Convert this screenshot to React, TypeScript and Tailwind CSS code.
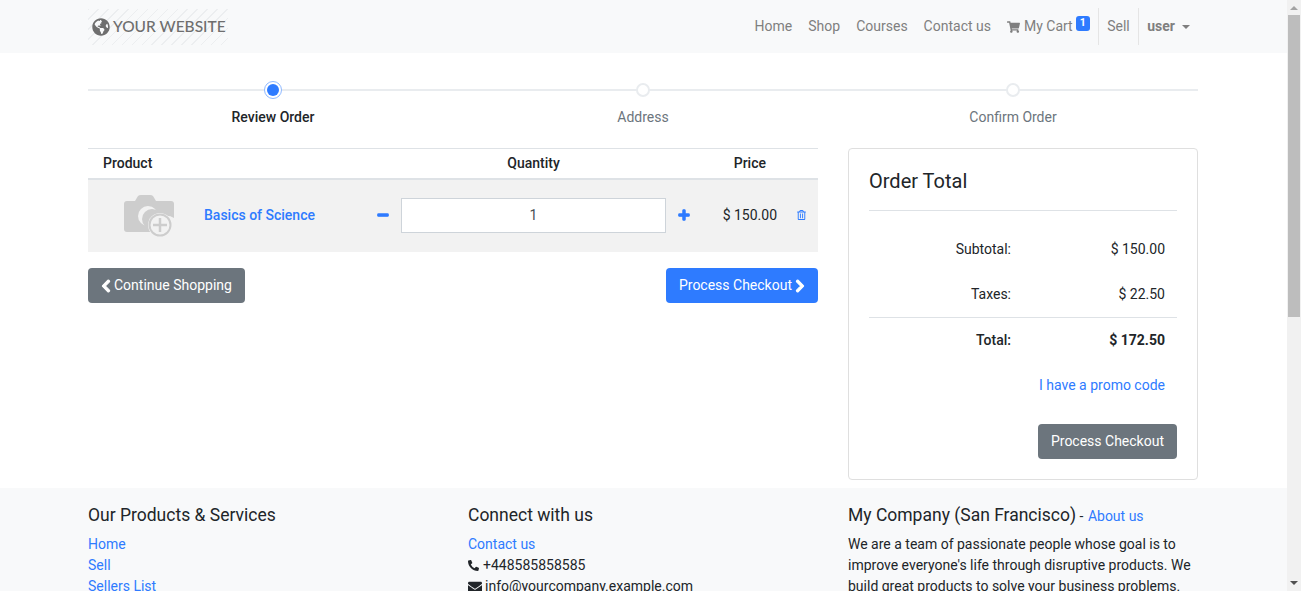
import { FaChevronLeft, FaChevronRight, FaEnvelope, FaGlobeAmericas, FaMinus, FaPhoneAlt, FaPlus, FaRegTrashAlt, FaShoppingCart } from "react-icons/fa";

function Step({ label, active }: { label: string; active?: boolean }) {
    return (
        <div className="flex flex-col items-center w-[370px]">
            <div className="h-[18px] flex items-center">
                {active ? (
                    <div className="relative z-10 w-[18px] h-[18px] rounded-full bg-white border border-[#8fb9ff] flex items-center justify-center">
                        <div className="w-[12px] h-[12px] rounded-full bg-[#2e7bff]" />
                    </div>
                ) : (
                    <div className="relative z-10 w-[14px] h-[14px] rounded-full bg-white border-2 border-[#e9ecef]" />
                )}
            </div>
            <div className={`mt-[8px] text-[14px] leading-[21px] ${active ? "font-medium text-[#212529]" : "text-[#6c757d]"}`}>{label}</div>
        </div>
    );
}

export default function App() {
    return (
        <div className="h-[591px] overflow-hidden flex font-['Roboto',sans-serif] text-[14px] text-[#212529]">
            <div className="w-[1287px] shrink-0">
                <nav className="h-[53px] bg-[#f8f9fa] pl-[88px] pr-[97px] flex items-center justify-between">
                    <div className="h-[36px] w-[140px] flex items-center text-[#6e6e6e] font-['Lato',sans-serif] text-[15.5px] font-medium bg-[repeating-linear-gradient(135deg,#eceef0_0px,#eceef0_1px,transparent_1px,transparent_7px)]">
                        <FaGlobeAmericas className="w-[18px] h-[18px] ml-[4px] mr-[3px]" />
                        YOUR WEBSITE
                    </div>
                    <div className="flex items-center text-[#7f7f7f]">
                        <span className="mr-4">Home</span>
                        <span className="mr-4">Shop</span>
                        <span className="mr-4">Courses</span>
                        <span className="mr-4">Contact us</span>
                        <FaShoppingCart className="w-[13px] h-[12px] mr-[4px]" />
                        <span>My Cart</span>
                        <span className="ml-[3px] mb-[6px] bg-[#2e7bff] text-white text-[10.5px] font-bold leading-none px-[4px] py-[2px] rounded-[3px]">1</span>
                        <div className="ml-[8px] border-l border-[#e5e5e5] pl-[8.5px] h-[37px] flex items-center">Sell</div>
                        <div className="ml-[8.5px] border-l border-[#e5e5e5] pl-[8px] h-[37px] flex items-center font-bold">
                            user
                            <span className="ml-[7px] border-x-[4px] border-x-transparent border-t-[4px] border-t-[#7f7f7f]" />
                        </div>
                    </div>
                </nav>
                <main className="h-[435px] px-[88px] pt-[28px]">
                    <div className="relative flex w-[1110px]">
                        <div className="absolute left-0 right-0 top-[8px] h-[2px] bg-[#e9ecef]" />
                        <Step label="Review Order" active />
                        <Step label="Address" />
                        <Step label="Confirm Order" />
                    </div>
                    <div className="flex gap-[30px] mt-[20px]">
                        <div className="w-[730px]">
                            <div className="h-[32px] border-t border-b-2 border-[#dee2e6] flex items-center font-medium">
                                <div className="w-[313px] pl-[15px]">Product</div>
                                <div className="w-[265px] text-center">Quantity</div>
                                <div className="w-[100px] text-right">Price</div>
                            </div>
                            <div className="h-[72px] pb-[2px] bg-[#f2f2f2] flex items-center">
                                <div className="w-[88px] flex justify-end">
                                    <CameraIcon />
                                </div>
                                <a className="ml-[28px] w-[173px] text-[#2e7bff] font-medium">Basics of Science</a>
                                <FaMinus className="w-[12px] h-[12px] text-[#2e7bff]" stroke="currentColor" strokeWidth={50} />
                                <div className="ml-[12px] w-[265px] h-[35px] bg-white border border-[#ced4da] flex items-center justify-center text-[#495057]">1</div>
                                <FaPlus className="w-[12px] h-[12px] text-[#2e7bff] ml-[12px]" stroke="currentColor" strokeWidth={50} />
                                <div className="ml-[27px] w-[60px] text-right whitespace-nowrap">$ 150.00</div>
                                <FaRegTrashAlt className="ml-[20px] w-[9px] h-[10px] text-[#2e7bff]" />
                            </div>
                            <div className="flex justify-between mt-[16px]">
                                <button className="h-[35px] px-[13px] rounded bg-[#6c757d] text-white flex items-center gap-[3px]">
                                    <FaChevronLeft className="w-[10px] h-[14px]" stroke="currentColor" strokeWidth={40} />
                                    Continue Shopping
                                </button>
                                <button className="h-[35px] px-[13px] rounded bg-[#2e7bff] text-white flex items-center gap-[3px]">
                                    Process Checkout
                                    <FaChevronRight className="w-[10px] h-[14px]" stroke="currentColor" strokeWidth={40} />
                                </button>
                            </div>
                        </div>
                        <div className="w-[350px] h-[332px] border border-[#dfdfdf] rounded px-[20px] pt-[20px]">
                            <div className="text-[20px] leading-[24px] pb-[17px] border-b border-[#dee2e6]">Order Total</div>
                            <div className="flex h-[77px] items-center">
                                <div className="w-[142px] text-right">Subtotal:</div>
                                <div className="w-[154px] text-right">$ 150.00</div>
                            </div>
                            <div className="flex h-[12px] items-center">
                                <div className="w-[142px] text-right">Taxes:</div>
                                <div className="w-[154px] text-right">$ 22.50</div>
                            </div>
                            <div className="flex h-[45px] items-center mt-[17px] border-t border-[#dee2e6] font-bold">
                                <div className="w-[142px] text-right font-medium">Total:</div>
                                <div className="w-[154px] text-right">$ 172.50</div>
                            </div>
                            <div className="text-right pr-[12px] text-[#2e7bff] mt-[13px]">I have a promo code</div>
                            <div className="flex justify-end mt-[28px]">
                                <button className="h-[35px] px-[13px] rounded bg-[#6c757d] text-white">Process Checkout</button>
                            </div>
                        </div>
                    </div>
                </main>
                <footer className="h-[103px] bg-[#f8f9fa] pl-[88px] pt-[17px] flex overflow-hidden leading-[21px]">
                    <div className="w-[380px]">
                        <div className="text-[17.5px] leading-[21px] mb-[8px]">Our Products &amp; Services</div>
                        <div className="text-[#2e7bff]">Home</div>
                        <div className="text-[#2e7bff]">Sell</div>
                        <div className="text-[#2e7bff]">Sellers List</div>
                    </div>
                    <div className="w-[380px]">
                        <div className="text-[17.5px] leading-[21px] mb-[8px]">Connect with us</div>
                        <div className="text-[#2e7bff]">Contact us</div>
                        <div className="flex items-center gap-[4px]"><FaPhoneAlt className="w-[11px] h-[11px]" />+448585858585</div>
                        <div className="flex items-center gap-[3px]"><FaEnvelope className="w-[14px] h-[14px]" />info@yourcompany.example.com</div>
                    </div>
                    <div className="w-[350px]">
                        <div className="h-[21px] leading-[21px] mb-[8px]"><span className="text-[17.5px]">My Company (San Francisco)</span> - <span className="ml-[1px] text-[#2e7bff]">About us</span></div>
                        <div>We are a team of passionate people whose goal is to improve everyone's life through disruptive products. We build great products to solve your business problems.</div>
                    </div>
                </footer>
            </div>
            <div className="w-[14px] bg-[#f1f1f1] shrink-0 flex flex-col items-center">
                <div className="h-[15px] flex items-center justify-center">
                    <span className="border-x-[4px] border-x-transparent border-b-[4px] border-b-[#a3a3a3]" />
                </div>
                <div className="w-[12px] h-[302px] bg-[#bdbdbd]" />
                <div className="mt-auto h-[17px] flex items-center justify-center">
                    <span className="border-x-[4px] border-x-transparent border-t-[4px] border-t-[#505050]" />
                </div>
            </div>
        </div>
    );
}

function CameraIcon() {
    return (
        <svg width="52" height="46" viewBox="0 0 52 46" className="mt-[4px]">
            <path fill="#cdcdcd" d="M3 7h8l3-5q1-1 3-1h9q2 0 3 1l3 5h15q3 0 3 3v14a13 13 0 0 0-20 14H3q-3 0-3-3V10q0-3 3-3z" />
            <circle cx="24" cy="22" r="10" fill="#f2f2f2" />
            <circle cx="28" cy="25" r="10" fill="#cdcdcd" />
            <circle cx="36" cy="31" r="12" fill="#f2f2f2" />
            <circle cx="36" cy="31" r="10.5" fill="none" stroke="#cdcdcd" strokeWidth="2" />
            <path d="M36 24v14M29 31h14" stroke="#cdcdcd" strokeWidth="2.5" />
        </svg>
    );
}
